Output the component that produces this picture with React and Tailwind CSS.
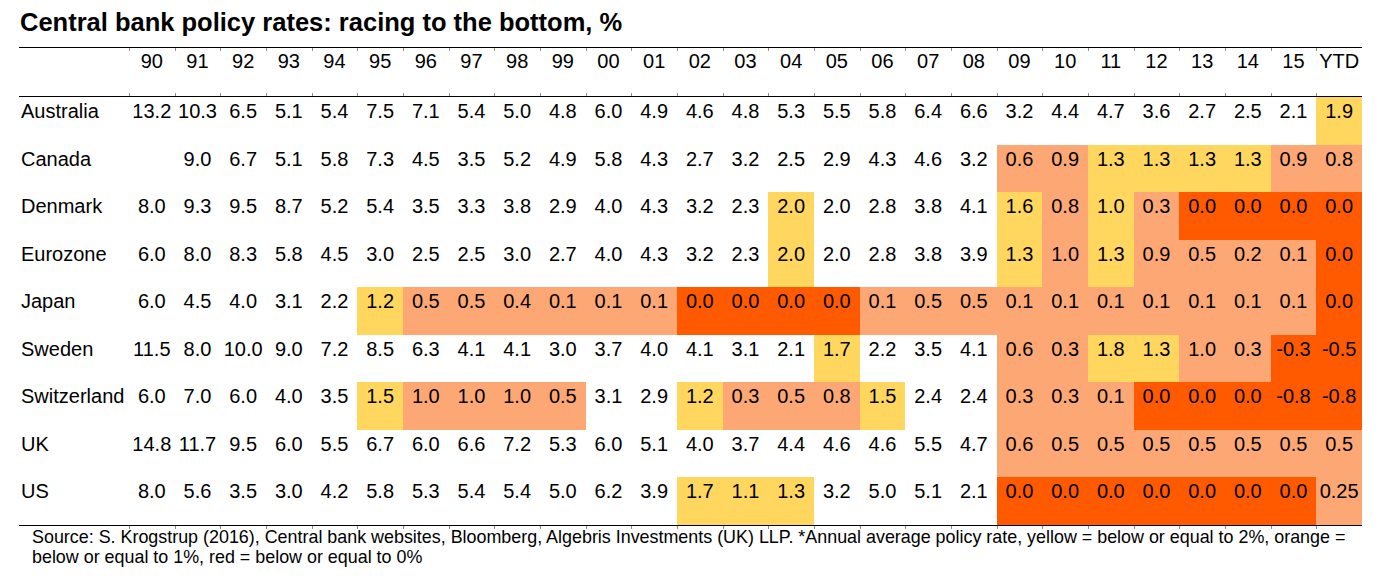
import React from 'react';

const YEARS = ['90','91','92','93','94','95','96','97','98','99','00','01','02','03','04','05','06','07','08','09','10','11','12','13','14','15','YTD'];

const ROWS = [
  { name: 'Australia', v: '13.2 10.3 6.5 5.1 5.4 7.5 7.1 5.4 5.0 4.8 6.0 4.9 4.6 4.8 5.3 5.5 5.8 6.4 6.6 3.2 4.4 4.7 3.6 2.7 2.5 2.1 1.9', c: '..........................Y', h: 'h-[48px]' },
  { name: 'Canada', v: '_ 9.0 6.7 5.1 5.8 7.3 4.5 3.5 5.2 4.9 5.8 4.3 2.7 3.2 2.5 2.9 4.3 4.6 3.2 0.6 0.9 1.3 1.3 1.3 1.3 0.9 0.8', c: '...................OOYYYYOO', h: 'h-[47px]' },
  { name: 'Denmark', v: '8.0 9.3 9.5 8.7 5.2 5.4 3.5 3.3 3.8 2.9 4.0 4.3 3.2 2.3 2.0 2.0 2.8 3.8 4.1 1.6 0.8 1.0 0.3 0.0 0.0 0.0 0.0', c: '..............Y....YOYORRRR', h: 'h-[48px]' },
  { name: 'Eurozone', v: '6.0 8.0 8.3 5.8 4.5 3.0 2.5 2.5 3.0 2.7 4.0 4.3 3.2 2.3 2.0 2.0 2.8 3.8 3.9 1.3 1.0 1.3 0.9 0.5 0.2 0.1 0.0', c: '..............Y....YOYOOOOR', h: 'h-[47px]' },
  { name: 'Japan', v: '6.0 4.5 4.0 3.1 2.2 1.2 0.5 0.5 0.4 0.1 0.1 0.1 0.0 0.0 0.0 0.0 0.1 0.5 0.5 0.1 0.1 0.1 0.1 0.1 0.1 0.1 0.0', c: '.....YOOOOOORRRROOOOOOOOOOR', h: 'h-[48px]' },
  { name: 'Sweden', v: '11.5 8.0 10.0 9.0 7.2 8.5 6.3 4.1 4.1 3.0 3.7 4.0 4.1 3.1 2.1 1.7 2.2 3.5 4.1 0.6 0.3 1.8 1.3 1.0 0.3 -0.3 -0.5', c: '...............Y...OOYYOORR', h: 'h-[47px]' },
  { name: 'Switzerland', v: '6.0 7.0 6.0 4.0 3.5 1.5 1.0 1.0 1.0 0.5 3.1 2.9 1.2 0.3 0.5 0.8 1.5 2.4 2.4 0.3 0.3 0.1 0.0 0.0 0.0 -0.8 -0.8', c: '.....YOOOO..YOOOY..OOORRRRR', h: 'h-[48px]' },
  { name: 'UK', v: '14.8 11.7 9.5 6.0 5.5 6.7 6.0 6.6 7.2 5.3 6.0 5.1 4.0 3.7 4.4 4.6 4.6 5.5 4.7 0.6 0.5 0.5 0.5 0.5 0.5 0.5 0.5', c: '...................OOOOOOOO', h: 'h-[47px]' },
  { name: 'US', v: '8.0 5.6 3.5 3.0 4.2 5.8 5.3 5.4 5.4 5.0 6.2 3.9 1.7 1.1 1.3 3.2 5.0 5.1 2.1 0.0 0.0 0.0 0.0 0.0 0.0 0.0 0.25', c: '............YYY....RRRRRRRO', h: 'h-[48px]' },
];

const BG = {
  '.': '',
  Y: 'bg-[#FFD75F]',
  O: 'bg-[#FDA874]',
  R: 'bg-[#FF5A00]',
};

const GRID = 'grid grid-cols-[110px_repeat(27,minmax(0,1fr))]';

function TickTop() {
  return <span className="absolute left-0 top-0 w-px h-[3px] bg-[#8c8c8c]" />;
}
function TickBottom() {
  return <span className="absolute left-0 bottom-0 w-px h-[3px] bg-[#8c8c8c]" />;
}

export default function App() {
  return (
    <div className="w-[1396px] h-[583px] bg-white text-black font-['Liberation_Sans',Arial,sans-serif] overflow-hidden pt-[10px]">
      <h1 className="pl-[20px] text-[25.5px] leading-[25px] font-bold mb-[12px]">
        Central bank policy rates: racing to the bottom, %
      </h1>

      <div className="ml-[19px] w-[1343px]">
        {/* header */}
        <div className={`${GRID} border-t border-b border-black h-[50px] text-[20px] leading-[20px]`}>
          <div />
          {YEARS.map((y) => (
            <div key={y} className="relative text-center pt-[3px]">
              <TickTop />
              <TickBottom />
              {y}
            </div>
          ))}
        </div>

        {/* body */}
        {ROWS.map((r) => {
          const vals = r.v.split(' ');
          return (
            <div key={r.name} className={`${GRID} ${r.h} text-[20px] leading-[20px]`}>
              <div className="pl-[2px] pt-[4px] whitespace-nowrap">{r.name}</div>
              {vals.map((val, i) => (
                <div key={i} className={`text-center pt-[4px] whitespace-nowrap ${BG[r.c[i]]}`}>
                  {val === '_' ? '' : val}
                </div>
              ))}
            </div>
          );
        })}

        {/* bottom line with ticks */}
        <div className={`${GRID} border-t border-black h-0`}>
          <div />
          {YEARS.map((y) => (
            <div key={y} className="relative">
              <TickTop />
            </div>
          ))}
        </div>
      </div>

      <p className="pl-[32px] pt-[1px] text-[17.9px] leading-[20px] whitespace-nowrap">
        Source: S. Krogstrup (2016), Central bank websites, Bloomberg, Algebris Investments (UK) LLP. *Annual average policy rate, yellow = below or equal to 2%, orange =
        <br />
        below or equal to 1%, red = below or equal to 0%
      </p>
    </div>
  );
}
